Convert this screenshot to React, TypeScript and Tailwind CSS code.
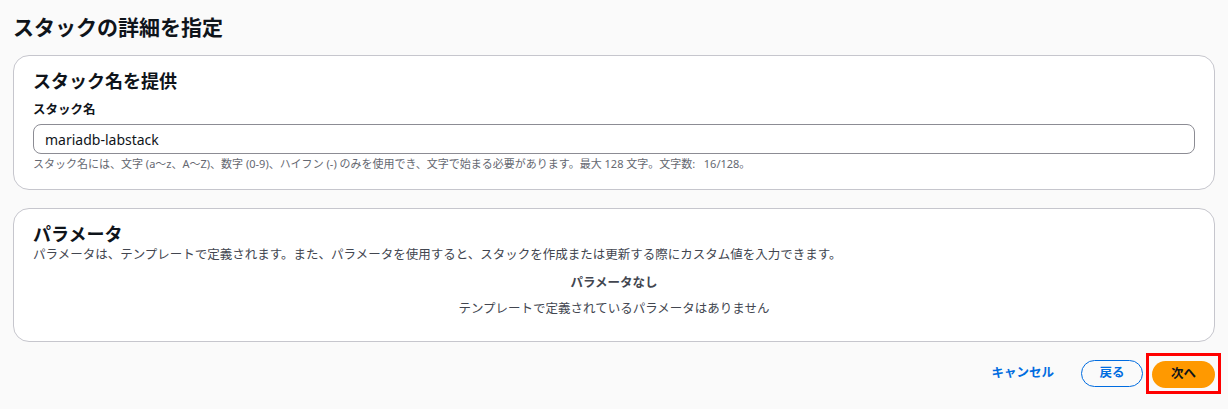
import React from 'react';

const font = { fontFamily: '"Noto Sans", "Noto Sans CJK JP", sans-serif' };

export default function App() {
  return (
    <div className="w-[1228px] h-[409px] bg-[#fafafa] text-[#16191f] overflow-hidden" style={font}>
      <div className="px-[13px] pt-[13px]">
        <h1 className="text-[21px] leading-[28px] font-bold text-[#0f141a]">スタックの詳細を指定</h1>

        <section className="mt-[14px] w-[1202px] h-[135px] rounded-[16px] border border-[#c6c6cd] bg-white px-[19px] pt-[12px]">
          <h2 className="text-[18px] leading-[26px] font-bold text-[#0f141a]">スタック名を提供</h2>
          <label className="block mt-[8px] text-[12.5px] leading-[16px] font-bold text-[#0f141a]">スタック名</label>
          <div className="mt-[6px] h-[30px] rounded-[8px] border border-[#8c8c94] flex items-center px-[11px] text-[14px] text-[#0f141a]">
            mariadb-labstack
          </div>
          <p className="mt-[2px] text-[11px] leading-[16px] text-[#656871]">
            スタック名には、文字 (a〜z、A〜Z)、数字 (0-9)、ハイフン (-) のみを使用でき、文字で始まる必要があります。最大 128 文字。文字数:&nbsp;&nbsp; 16/128。
          </p>
        </section>

        <section className="mt-[18px] w-[1202px] h-[134px] rounded-[16px] border border-[#c6c6cd] bg-white px-[19px] pt-[13px]">
          <h2 className="text-[18px] leading-[24px] font-bold text-[#0f141a]">パラメータ</h2>
          <p className="text-[12.5px] leading-[18px] text-[#424650]">
            パラメータは、テンプレートで定義されます。また、パラメータを使用すると、スタックを作成または更新する際にカスタム値を入力できます。
          </p>
          <div className="mt-[9px] text-center">
            <p className="text-[12.5px] leading-[20px] font-bold text-[#424650]">パラメータなし</p>
            <p className="mt-[6px] text-[12.5px] leading-[20px] text-[#424650]">テンプレートで定義されているパラメータはありません</p>
          </div>
        </section>

        <div className="mt-[11px] flex items-center justify-end mr-[-6px]">
          <button className="text-[12.5px] font-bold text-[#006ce0] mr-[27px]">キャンセル</button>
          <button className="h-[27px] w-[62px] rounded-full border border-[#006ce0] text-[12.5px] font-bold text-[#006ce0] mr-[3px]">戻る</button>
          <div className="border-[3px] border-[#ff0000] px-[3px] pt-[5px] pb-[3px]">
            <button className="h-[27px] w-[63px] rounded-full bg-[#ff9900] text-[12.5px] font-bold text-[#0f141a] block">次へ</button>
          </div>
        </div>
      </div>
    </div>
  );
}
